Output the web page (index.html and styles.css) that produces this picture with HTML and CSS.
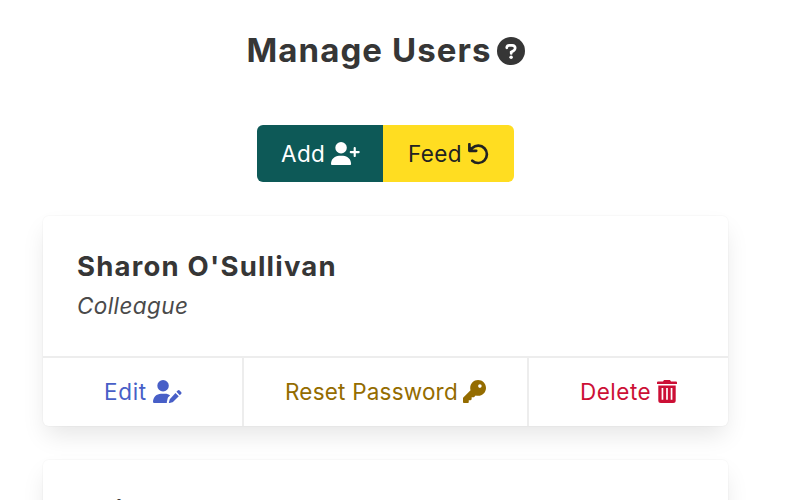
FILE: index.html
```html
<!DOCTYPE html>
<html lang="en">
<head>
<meta charset="utf-8">
<title>Manage Users</title>
<link rel="stylesheet" href="styles.css">
</head>
<body>
<main class="page">
  <h1 class="title"><span>Manage Users</span>
    <svg class="help" viewBox="0 0 28 28"><circle cx="14" cy="14" r="14" fill="currentColor"/><path d="M9.800 10.800V10.200Q10.100 8.300 12.200 8.300H15.200Q18.200 8.500 18.200 11.100Q18.200 12.800 16.600 13.700L14.200 15.100V16.400" fill="none" stroke="#fff" stroke-width="2.700" stroke-linecap="round"/><circle cx="14.100" cy="20.300" r="1.750" fill="#fff"/></svg>
  </h1>
  <div class="buttons">
    <button class="button add"><span>Add</span>
      <svg class="wide" viewBox="0 0 640 512"><path fill="currentColor" d="M96 128a128 128 0 1 1 256 0A128 128 0 1 1 96 128zM0 490C0 383.800 79.800 304 178.300 304h91.400C368.200 304 448 383.800 448 490q0 22-22 22H22Q0 512 0 490zM504 312V248H440c-13.300 0-24-10.700-24-24s10.700-24 24-24h64V136c0-13.300 10.700-24 24-24s24 10.700 24 24v64h64c13.300 0 24 10.700 24 24s-10.700 24-24 24H552v64c0 13.300-10.700 24-24 24s-24-10.700-24-24z"/></svg>
    </button>
    <button class="button feed"><span>Feed</span>
      <svg class="undo" viewBox="0 0 21 22"><path d="M1.400 1.200V7.800H8.200M2 7.200L4.300 4.900A8.700 8.700 0 1 1 4.300 17.700" fill="none" stroke="currentColor" stroke-width="2.700" stroke-linecap="round" stroke-linejoin="round"/></svg>
    </button>
  </div>
  <section class="card">
    <div class="content">
      <h2 class="name">Sharon O'Sullivan</h2>
      <p class="role">Colleague</p>
    </div>
    <footer class="actions">
      <a class="action edit"><span>Edit</span>
        <svg class="wide" viewBox="0 0 640 512"><path fill="currentColor" d="M96 128a128 128 0 1 1 256 0A128 128 0 1 1 96 128zM0 482C0 384 80 304 178 304h92c43 0 82 15 111 40L344 381q-12 12-16 28L309 485q-3 14 1 27H24Q0 512 0 482zM550 236q22-22 44 0l31 31q21 21 0 42l-29 29-74-74zM500 287l74 74L444 490q-6 6-15 8l-63 15q-16 3-12-13l16-62q2-9 8-15z"/></svg>
      </a>
      <a class="action reset"><span>Reset Password</span>
        <svg class="key" viewBox="0 0 512 512"><path fill="currentColor" fill-rule="evenodd" d="M336 352c97 0 176-79 176-176S433 0 336 0 160 79 160 176c0 19 3 37 8 54L7 391c-5 5-7 11-7 17v80c0 13 11 24 24 24h80c13 0 24-11 24-24v-40h40c13 0 24-11 24-24v-40h40c6 0 13-3 17-7l33-33c17 5 35 8 54 8zM376 96a40 40 0 1 1 0 80 40 40 0 1 1 0-80z"/></svg>
      </a>
      <a class="action delete"><span>Delete</span>
        <svg class="trash" viewBox="0 0 20 23"><path fill="currentColor" fill-rule="evenodd" d="M7 0H13L14 1.500H19Q20 1.500 20 2.500V4H0V2.500Q0 1.500 1 1.500H6zM1.300 5.600H18.700V20.500Q18.700 23 16.200 23H3.800Q1.300 23 1.300 20.500zM4.600 8V19.700H6.300V8zM9.150 8V19.700H10.850V8zM13.700 8V19.700H15.400V8z"/></svg>
      </a>
    </footer>
  </section>
  <section class="card">
    <div class="content">
      <h2 class="name">Daisy</h2>
      <p class="role">Colleague</p>
    </div>
  </section>
</main>
</body>
</html>
```
FILE: styles.css
```css
* { box-sizing: border-box; }
html { overflow: hidden; }
body { margin: 0; height: 500px; overflow: hidden; background: #fff; color: #363636; font: 22.500px/34px Inter, "Open Sans", sans-serif; letter-spacing: .18px; }
svg { display: block; flex: none; }
.page { width: 771px; height: 500px; overflow: hidden; padding: 30px 43px 0; }
.title { display: flex; justify-content: center; align-items: center; gap: 6px; height: 40px; margin: 0; font-size: 33px; line-height: 40px; font-weight: 700; }
.title span { width: 244px; white-space: nowrap; letter-spacing: 1.080px; }
.help { width: 28px; height: 28px; margin-top: 2px; }
.buttons { display: flex; justify-content: center; margin-top: 55px; }
.button { display: flex; align-items: center; gap: 6px; height: 57px; border: 0; padding: 0 0 0 24px; font: inherit; letter-spacing: .4px; white-space: nowrap; }
.button span { padding-top: 1px; }
.add { width: 126px; background: #0d5957; color: #fff; border-radius: 6px 0 0 6px; }
.add span { width: 44px; }
.feed { width: 131px; background: #ffdd21; color: #222; border-radius: 0 6px 6px 0; padding-left: 25px; }
.feed span { width: 54px; text-align: left; }
.wide { width: 28.750px; height: 23px; }
.undo { width: 21px; height: 22px; }
.card { border-radius: 6px; background: #fff; box-shadow: 0 12px 24px -3px rgba(10,10,10,.1), 0 0 0 1px rgba(10,10,10,.02); margin-bottom: 34.500px; }
.buttons + .card { margin-top: 34px; }
.content { height: 140px; padding: 33px 34px 0; }
.name { margin: 0; font-size: 27.500px; line-height: 34px; font-weight: 700; letter-spacing: 1.200px; white-space: nowrap; }
.role { margin: 6px 0 0; font-style: italic; letter-spacing: .4px; color: #4a4a4a; line-height: 34px; }
.actions { display: flex; height: 69.500px; border-top: 2px solid #ededed; }
.action { display: flex; align-items: center; gap: 6px; padding-bottom: 1px; border-right: 2px solid #ededed; white-space: nowrap; }
.action span { padding-top: 2px; }
.edit { width: 201px; padding-left: 61px; letter-spacing: .7px; color: #485fc7; }
.edit span { width: 43px; }
.reset { width: 285px; padding-left: 41px; color: #946c00; }
.reset span { width: 172px; letter-spacing: .2px; }
.delete { width: 199px; padding-left: 51px; border: 0; letter-spacing: .5px; color: #cc0f35; }
.delete span { width: 71px; }
.key { width: 23px; height: 23px; }
.trash { width: 20px; height: 23px; }
```
